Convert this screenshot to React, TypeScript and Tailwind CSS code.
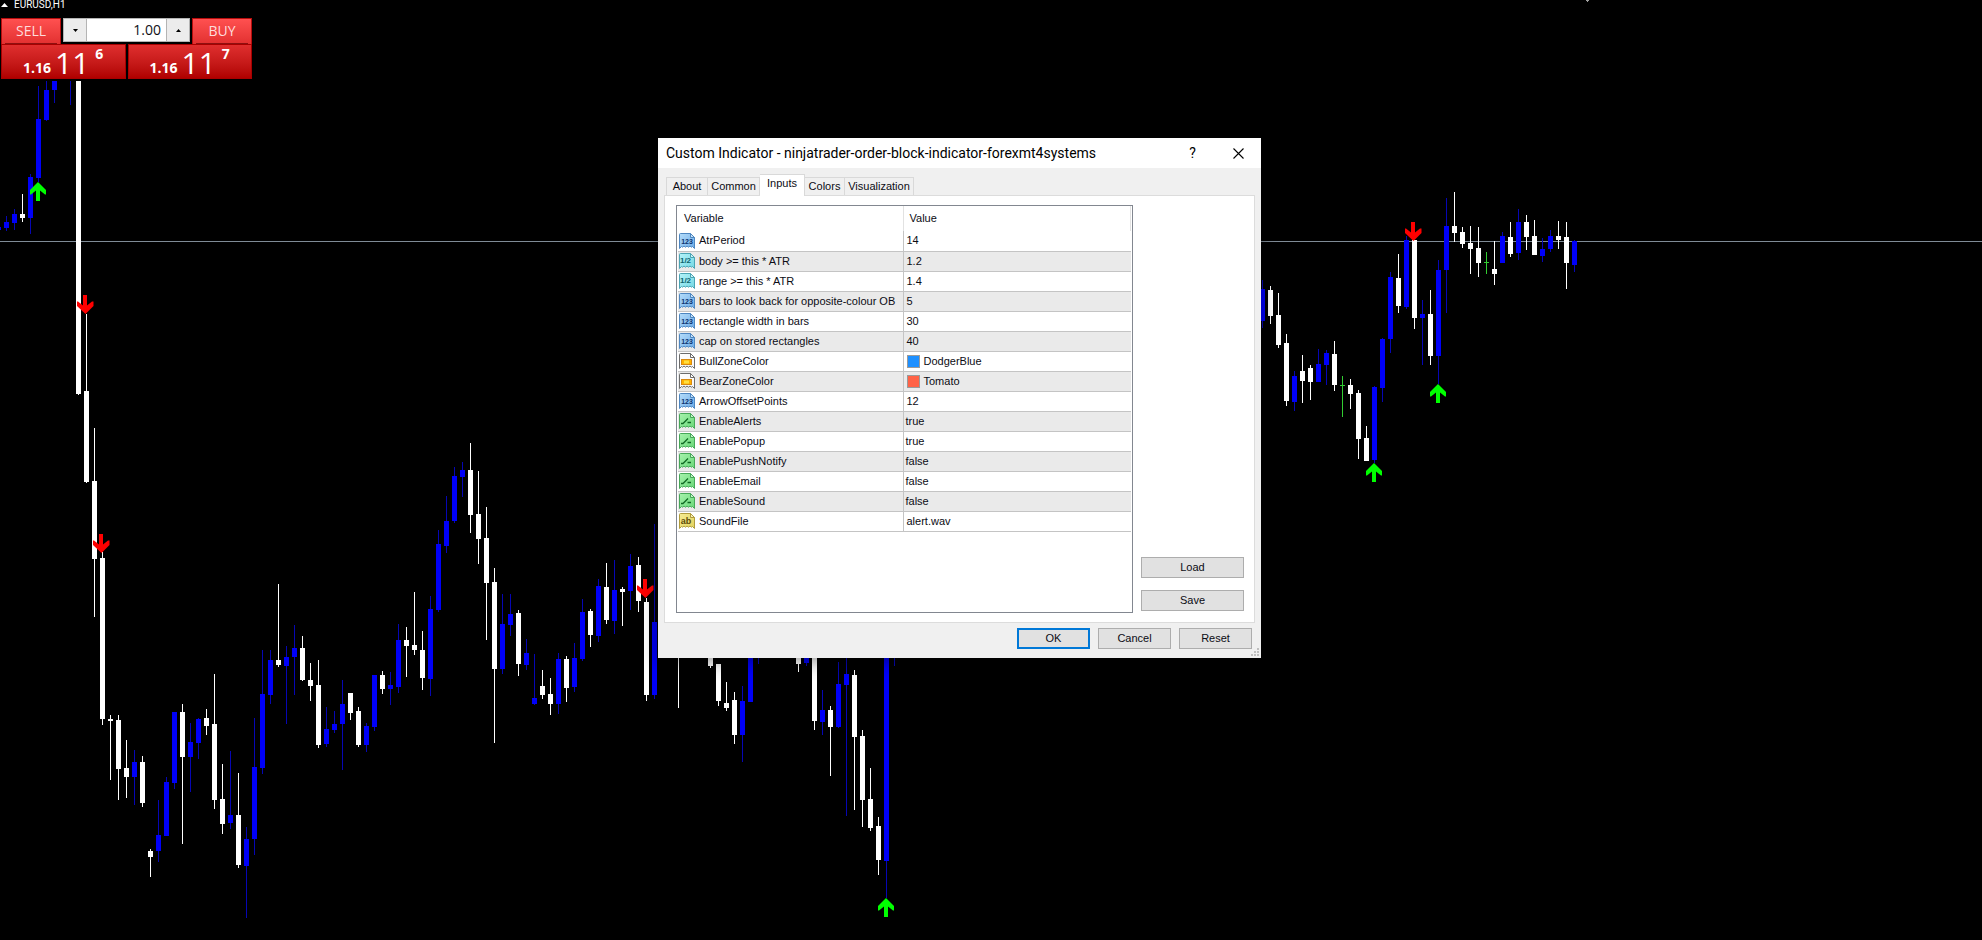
import { useState } from 'react';

type Tone = 'b' | 'w' | 'g';
type Candle = [x: number, high: number, top: number, bottom: number, low: number, tone: Tone];

const candles: Candle[] = [
  [-2, 227, 227, 230, 230, 'b'], [6, 216, 222, 228, 231, 'b'], [14, 209, 214, 223, 230, 'b'],
  [22, 194, 214, 218, 222, 'w'], [30, 174, 177, 218, 234, 'b'], [38, 86, 119, 178, 182, 'b'],
  [46, 81, 90, 120, 121, 'b'], [54, 81, 81, 90, 103, 'b'], [70, 81, 81, 81, 105, 'b'],
  [78, 81, 81, 394, 395, 'w'], [86, 314, 391, 482, 483, 'w'], [94, 428, 481, 559, 617, 'w'],
  [102, 552, 558, 719, 725, 'w'], [110, 715, 719, 721, 780, 'w'], [118, 715, 720, 769, 800, 'w'],
  [126, 740, 768, 777, 798, 'w'], [134, 750, 762, 777, 805, 'b'], [142, 756, 762, 803, 807, 'w'],
  [150, 849, 851, 857, 877, 'w'], [158, 800, 835, 851, 862, 'b'], [166, 777, 782, 836, 836, 'b'],
  [174, 712, 712, 783, 789, 'b'], [182, 704, 712, 757, 844, 'w'], [190, 723, 742, 757, 792, 'b'],
  [198, 718, 719, 743, 759, 'b'], [206, 709, 718, 726, 735, 'w'], [214, 674, 724, 800, 809, 'w'],
  [222, 764, 799, 824, 834, 'w'], [230, 751, 815, 823, 829, 'b'], [238, 773, 815, 865, 868, 'w'],
  [246, 827, 839, 866, 918, 'b'], [254, 718, 767, 839, 855, 'b'], [262, 650, 694, 768, 774, 'b'],
  [270, 650, 660, 695, 704, 'b'], [278, 584, 660, 665, 667, 'w'], [286, 646, 657, 666, 724, 'b'],
  [294, 625, 648, 657, 695, 'b'], [302, 636, 648, 680, 681, 'w'], [310, 663, 680, 686, 701, 'w'],
  [318, 660, 685, 745, 748, 'w'], [326, 707, 729, 744, 747, 'b'], [334, 711, 724, 730, 733, 'b'],
  [342, 680, 704, 724, 770, 'b'], [350, 693, 693, 713, 720, 'w'], [358, 707, 711, 745, 747, 'w'],
  [366, 723, 726, 745, 752, 'b'], [374, 675, 675, 727, 731, 'b'], [382, 671, 675, 689, 694, 'w'],
  [390, 672, 685, 689, 705, 'b'], [398, 624, 640, 687, 693, 'b'], [406, 627, 640, 646, 677, 'w'],
  [414, 592, 645, 650, 655, 'w'], [422, 631, 650, 678, 690, 'w'], [430, 596, 609, 679, 696, 'b'],
  [438, 530, 544, 610, 612, 'b'], [446, 496, 521, 546, 553, 'b'], [454, 467, 476, 521, 523, 'b'],
  [462, 462, 470, 477, 497, 'b'], [470, 443, 470, 515, 533, 'w'], [478, 471, 514, 539, 564, 'w'],
  [486, 507, 538, 583, 640, 'w'], [494, 568, 582, 669, 743, 'w'], [502, 594, 624, 669, 674, 'b'],
  [510, 594, 614, 625, 636, 'b'], [518, 610, 613, 664, 676, 'w'], [526, 639, 653, 665, 670, 'b'],
  [534, 654, 698, 704, 705, 'b'], [542, 670, 686, 695, 699, 'w'], [550, 678, 694, 704, 715, 'w'],
  [558, 653, 659, 704, 714, 'b'], [566, 656, 659, 688, 702, 'w'], [574, 643, 658, 687, 692, 'b'],
  [582, 599, 612, 659, 661, 'b'], [590, 609, 611, 635, 647, 'w'], [598, 579, 586, 636, 642, 'b'],
  [606, 563, 587, 620, 624, 'w'], [614, 560, 590, 621, 634, 'b'], [622, 587, 589, 592, 626, 'w'],
  [630, 554, 566, 591, 610, 'b'], [638, 557, 565, 601, 612, 'w'], [646, 598, 602, 695, 701, 'w'],
  [654, 524, 622, 695, 699, 'b'], [678, 600, 610, 640, 708, 'w'], [710, 600, 620, 666, 668, 'w'],
  [718, 664, 664, 701, 706, 'w'], [726, 682, 703, 708, 711, 'w'], [734, 692, 700, 735, 744, 'w'],
  [742, 686, 701, 735, 762, 'b'], [750, 620, 630, 702, 702, 'b'], [758, 620, 630, 650, 664, 'b'],
  [798, 620, 630, 664, 672, 'w'], [806, 620, 640, 663, 666, 'b'], [814, 620, 630, 721, 730, 'w'],
  [822, 690, 710, 722, 735, 'b'], [830, 706, 710, 727, 776, 'w'], [838, 662, 684, 727, 728, 'b'],
  [846, 640, 674, 685, 816, 'b'], [854, 670, 675, 737, 810, 'w'], [862, 730, 736, 800, 827, 'w'],
  [870, 768, 799, 828, 831, 'w'], [878, 817, 826, 860, 875, 'w'], [886, 500, 520, 861, 898, 'b'],
  [894, 500, 520, 640, 666, 'b'], [1262, 280, 289, 321, 328, 'b'], [1270, 286, 290, 316, 324, 'w'],
  [1278, 293, 315, 345, 348, 'w'], [1286, 334, 343, 401, 406, 'w'], [1294, 371, 376, 402, 411, 'b'],
  [1302, 355, 371, 381, 403, 'w'], [1310, 365, 368, 382, 400, 'w'], [1318, 349, 364, 382, 382, 'b'],
  [1326, 350, 353, 365, 385, 'b'], [1334, 341, 354, 385, 391, 'w'], [1342, 376, 385, 386, 417, 'g'],
  [1350, 379, 385, 394, 409, 'w'], [1358, 390, 393, 439, 459, 'w'], [1366, 426, 438, 461, 461, 'w'],
  [1374, 386, 387, 460, 463, 'b'], [1382, 338, 339, 388, 402, 'b'], [1390, 272, 277, 339, 353, 'b'],
  [1398, 254, 278, 306, 313, 'w'], [1406, 236, 240, 307, 309, 'b'], [1414, 240, 240, 318, 329, 'w'],
  [1422, 300, 314, 318, 365, 'b'], [1430, 290, 314, 356, 365, 'w'], [1438, 260, 270, 356, 384, 'b'],
  [1446, 198, 226, 270, 313, 'b'], [1454, 192, 226, 233, 242, 'w'], [1462, 227, 232, 244, 248, 'w'],
  [1470, 226, 243, 249, 274, 'w'], [1478, 227, 248, 263, 277, 'w'], [1486, 252, 262, 263, 274, 'g'],
  [1494, 241, 269, 274, 285, 'w'], [1502, 232, 236, 263, 263, 'b'], [1510, 222, 237, 254, 257, 'w'],
  [1518, 209, 222, 253, 260, 'b'], [1526, 215, 222, 237, 250, 'w'], [1534, 220, 236, 255, 255, 'w'],
  [1542, 238, 249, 256, 262, 'b'], [1550, 230, 236, 249, 252, 'b'], [1558, 221, 236, 240, 249, 'w'],
  [1566, 222, 237, 263, 289, 'w'], [1574, 240, 241, 265, 272, 'b'],
];

const bodyFill: Record<Tone, string> = { b: '#0000f8', w: '#ffffff', g: '#32cd32' };
const wickFill: Record<Tone, string> = { b: '#0606b4', w: '#ffffff', g: '#32cd32' };

const signals: { x: number; y: number; up: boolean }[] = [
  { x: 30, y: 182, up: true },
  { x: 77, y: 295, up: false },
  { x: 93, y: 534, up: false },
  { x: 637, y: 579, up: false },
  { x: 878, y: 898, up: true },
  { x: 1366, y: 463, up: true },
  { x: 1405, y: 222, up: false },
  { x: 1430, y: 384, up: true },
];

function Chart() {
  return (
    <svg className="absolute inset-0 h-full w-full" shapeRendering="crispEdges" role="img" aria-label="EURUSD H1 price chart">
      <rect x="0" y="241" width="100%" height="1" fill="#7f8b96" />
      {candles.map(([x, high, top, bottom, low, tone]) => (
        <g key={x}>
          <rect x={x} y={high} width="1" height={low - high} fill={wickFill[tone]} />
          <rect x={x - 2} y={top} width="5" height={bottom - top} fill={bodyFill[tone]} />
        </g>
      ))}
      {signals.map(({ x, y, up }) => (
        <path
          key={`${x}-${y}`}
          shapeRendering="auto"
          transform={`translate(${x} ${y})`}
          fill={up ? '#00ff00' : '#ff0000'}
          d={
            up
              ? 'M8 0 L16 8 V12.5 H15 L10 8.5 V19 H6 V8.5 L1 12.5 H0 V8 Z'
              : 'M6 0 H10 V10.5 L15 6.5 H16.5 V11 L8.5 19 L0 11 V6.5 H1 L6 10.5 Z'
          }
        />
      ))}
      <path d="M1586 0 h3 v1 h-1 v1 h-1 v-1 h-1 z" fill="#a0a0a0" />
    </svg>
  );
}

function Quote({ side, last }: { side: string; last: string }) {
  return (
    <button
      type="button"
      aria-label={`${side} at 1.1611${last}`}
      className="flex h-[35px] flex-1 gap-1 border border-[#a80000] bg-linear-to-b from-[#e02e2e] to-[#b00000] pl-[21px] font-bold text-white"
    >
      <span className="pt-[13px] text-sm">1.16</span>
      <span className="text-3xl leading-[36px] font-normal">11</span>
      <span className="pl-0.5 text-sm leading-[18px]">{last}</span>
    </button>
  );
}

function TradePanel() {
  const [lots, setLots] = useState(1);
  const side =
    'flex h-[26px] w-[60px] flex-col border border-b-0 border-[#b80d0d] bg-linear-to-b from-[#ff5050] to-[#e23030] px-[3px] text-sm text-[#ffdcdc]';
  const spin = 'flex w-6 shrink-0 items-center justify-center border border-[#b4b4b4] bg-[#ececec]';
  return (
    <section
      aria-label="One click trading"
      className="absolute top-0 left-0 w-[253px] font-['Open_Sans','Noto_Sans',sans-serif]"
    >
      <h1 className="flex h-[18px] items-start gap-1.5 pl-px font-['Roboto',sans-serif] text-[10px] leading-[10px] text-white">
        <svg className="mt-[3px]" width="7" height="4" aria-hidden="true">
          <path d="M3.5 0 L7 4 H0 Z" fill="#fff" />
        </svg>
        EURUSD,H1
      </h1>
      <div className="flex items-start justify-between px-px">
        <button type="button" className={side}>
          <span className="flex-1 border-b border-[#8e1010] leading-[24px]">SELL</span>
        </button>
        <div className="flex h-6 w-[127px] bg-white">
          <button type="button" aria-label="Decrease volume" className={spin} onClick={() => setLots(Math.max(0, lots - 1))}>
            <svg width="5" height="3" aria-hidden="true"><path d="M0 0 H5 L2.5 3 Z" fill="#000" /></svg>
          </button>
          <input
            aria-label="Volume"
            className="w-full min-w-0 border-y border-[#b4b4b4] bg-white px-[5px] text-right text-sm text-[#101018] outline-none"
            value={lots.toFixed(2)}
            onChange={(e) => setLots(Number(e.target.value) || 0)}
          />
          <button type="button" aria-label="Increase volume" className={spin} onClick={() => setLots(lots + 1)}>
            <svg width="5" height="3" aria-hidden="true"><path d="M0 3 H5 L2.5 0 Z" fill="#000" /></svg>
          </button>
        </div>
        <button type="button" className={side}>
          <span className="flex-1 border-b border-[#8e1010] leading-[24px]">BUY</span>
        </button>
      </div>
      <div className="flex gap-0.5 px-px">
        <Quote side="Sell" last="6" />
        <Quote side="Buy" last="7" />
      </div>
    </section>
  );
}

type Kind = 'int' | 'real' | 'color' | 'bool' | 'text';

const palette: Record<Kind, { from: string; to: string; edge: string; ink: string }> = {
  int: { from: '#b4dcfa', to: '#6cabe6', edge: '#4d86c0', ink: '#0b3470' },
  real: { from: '#b4f2f8', to: '#74d8e4', edge: '#4aa4b4', ink: '#0e6470' },
  color: { from: '#ffffff', to: '#f4f4f4', edge: '#6c6c6c', ink: '#e09010' },
  bool: { from: '#a6f2ac', to: '#68d878', edge: '#46a858', ink: '#106a24' },
  text: { from: '#f6ec94', to: '#e2d25c', edge: '#b09c3c', ink: '#5c4c08' },
};

function KindIcon({ kind }: { kind: Kind }) {
  const c = palette[kind];
  const id = `fill-${kind}`;
  return (
    <svg width="16" height="16" viewBox="0 0 16 16" aria-hidden="true" className="shrink-0">
      <defs>
        <linearGradient id={id} x1="0" y1="0" x2="1" y2="1">
          <stop offset="0" stopColor={c.from} />
          <stop offset="1" stopColor={c.to} />
        </linearGradient>
      </defs>
      <path
        d="M0.5 1.5 Q0.5 0.5 1.5 0.5 H11.5 L15.5 4.5 V15.5 L13.5 13.5 L12.5 14.2 L11 13 L9.5 14.2 L8 13 L6.5 14.2 L5 13 L3.5 14.2 L2.5 13.5 L0.5 15.5 Z"
        fill={`url(#${id})`}
        stroke={c.edge}
      />
      <path d="M11.5 0.5 V4.5 H15.5 Z" fill="#ffffff" fillOpacity="0.5" stroke={c.edge} />
      {kind === 'int' && (
        <text x="8" y="11" textAnchor="middle" fontSize="7" fontWeight="700" fontFamily="Liberation Sans, sans-serif" fill={c.ink}>
          123
        </text>
      )}
      {kind === 'real' && (
        <text x="6.5" y="10" textAnchor="middle" fontSize="8" fontWeight="700" fontFamily="Liberation Sans, sans-serif" fill={c.ink}>
          1/2
        </text>
      )}
      {kind === 'text' && (
        <text x="7" y="11" textAnchor="middle" fontSize="9" fontWeight="700" fontFamily="Liberation Sans, sans-serif" fill={c.ink}>
          ab
        </text>
      )}
      {kind === 'bool' && (
        <path d="M2 10.5 H4 L9 5.5 M8.5 9.5 H12" fill="none" stroke={c.ink} strokeWidth="1.3" />
      )}
      {kind === 'color' && (
        <>
          <rect x="2.5" y="6.5" width="10" height="5" fill="#ffb000" stroke="#d88a10" />
          <rect x="5" y="7.5" width="5" height="3" fill="#ffe040" />
        </>
      )}
    </svg>
  );
}

const rows: { kind: Kind; name: string; value: string; swatch?: string }[] = [
  { kind: 'int', name: 'AtrPeriod', value: '14' },
  { kind: 'real', name: 'body >= this * ATR', value: '1.2' },
  { kind: 'real', name: 'range >= this * ATR', value: '1.4' },
  { kind: 'int', name: 'bars to look back for opposite-colour OB', value: '5' },
  { kind: 'int', name: 'rectangle width in bars', value: '30' },
  { kind: 'int', name: 'cap on stored rectangles', value: '40' },
  { kind: 'color', name: 'BullZoneColor', value: 'DodgerBlue', swatch: 'bg-[#1e90ff]' },
  { kind: 'color', name: 'BearZoneColor', value: 'Tomato', swatch: 'bg-[#ff6347]' },
  { kind: 'int', name: 'ArrowOffsetPoints', value: '12' },
  { kind: 'bool', name: 'EnableAlerts', value: 'true' },
  { kind: 'bool', name: 'EnablePopup', value: 'true' },
  { kind: 'bool', name: 'EnablePushNotify', value: 'false' },
  { kind: 'bool', name: 'EnableEmail', value: 'false' },
  { kind: 'bool', name: 'EnableSound', value: 'false' },
  { kind: 'text', name: 'SoundFile', value: 'alert.wav' },
];

function InputsTable() {
  return (
    <div className="h-[408px] w-[457px] border border-[#828790] bg-white px-px">
      <table className="w-full table-fixed border-collapse text-left">
        <colgroup>
          <col className="w-[225px]" />
          <col />
        </colgroup>
        <thead>
          <tr className="h-[25px]">
            <th className="border-r border-[#e2e2e2] p-0 pl-1.5 font-normal">Variable</th>
            <th className="border-r border-[#e2e2e2] p-0 pl-1.5 font-normal">Value</th>
          </tr>
        </thead>
        <tbody>
          {rows.map((r) => (
            <tr key={r.name} className="h-5 border-b border-[#c4c4c4] even:bg-[#eaeaea]">
              <td className="border-r border-[#c4c4c4] p-0 pl-px">
                <span className="flex items-center gap-1 whitespace-nowrap">
                  <KindIcon kind={r.kind} />
                  {r.name}
                </span>
              </td>
              <td className={r.kind === 'bool' ? 'p-0 pl-0.5' : 'p-0 pl-[3px]'}>
                <span className="flex items-center gap-1">
                  {r.swatch && <span className={`h-[13px] w-[13px] border border-[#9a9a9a] ${r.swatch}`} />}
                  {r.value}
                </span>
              </td>
            </tr>
          ))}
        </tbody>
      </table>
    </div>
  );
}

const tabs: { label: string; size: string }[] = [
  { label: 'About', size: 'w-[42px]' },
  { label: 'Common', size: 'w-[52px]' },
  { label: 'Inputs', size: 'w-[45px]' },
  { label: 'Colors', size: 'w-10' },
  { label: 'Visualization', size: 'w-[69px]' },
];

function Dialog() {
  const [active, setActive] = useState('Inputs');
  const plain = 'h-[21px] border border-[#adadad] bg-[#e1e1e1]';
  return (
    <div
      role="dialog"
      aria-labelledby="dialog-title"
      className="absolute top-[138px] left-[658px] flex w-[603px] flex-col bg-[#f0f0f0] font-['Liberation_Sans',Arial,sans-serif] text-[11px] leading-[13px] text-[#0c0c14] shadow-[0_4px_16px_rgba(0,0,0,0.4)]"
    >
      <header className="flex h-[30px] items-center bg-white pl-2 font-['Roboto',sans-serif] text-black">
        <h2 id="dialog-title" className="flex-1 text-sm">
          Custom Indicator - ninjatrader-order-block-indicator-forexmt4systems
        </h2>
        <button type="button" aria-label="Help" className="h-full w-[45px] text-sm">
          ?
        </button>
        <button type="button" aria-label="Close" className="flex h-full w-[46px] items-center justify-center">
          <svg width="11" height="11" viewBox="0 0 11 11" aria-hidden="true">
            <path d="M0.5 0.5 L10.5 10.5 M10.5 0.5 L0.5 10.5" stroke="#000" strokeWidth="1.1" />
          </svg>
        </button>
      </header>
      <div role="tablist" className="flex items-end px-2 pt-1.5">
        {tabs.map((t) => (
          <button
            key={t.label}
            type="button"
            role="tab"
            aria-selected={active === t.label}
            onClick={() => setActive(t.label)}
            className={`${t.size} shrink-0 border-t border-r border-[#d9d9d9] first:border-l ${
              active === t.label ? 'z-10 -mb-px h-[22px] bg-white pb-1' : 'h-[18px]'
            }`}
          >
            {t.label}
          </button>
        ))}
      </div>
      <div role="tabpanel" className="mx-1.5 flex h-[428px] justify-between border border-[#dcdcdc] bg-white py-[9px] pr-2.5 pl-[11px]">
        <InputsTable />
        <div className="flex w-[103px] flex-col justify-end gap-3 pb-0.5">
          <button type="button" className={plain}>Load</button>
          <button type="button" className={plain}>Save</button>
        </div>
      </div>
      <footer className="flex h-[35px] items-start justify-end gap-2 pt-[5px] pr-[9px]">
        <button type="button" className="h-[21px] w-[73px] border-2 border-[#0078d7] bg-[#e1e1e1]">OK</button>
        <button type="button" className={`w-[73px] ${plain}`}>Cancel</button>
        <button type="button" className={`w-[73px] ${plain}`}>Reset</button>
      </footer>
      <svg className="absolute right-0.5 bottom-0.5" width="8" height="8" shapeRendering="crispEdges" aria-hidden="true">
        <path d="M6 0h2v2h-2z M3 3h2v2h-2z M6 3h2v2h-2z M0 6h2v2h-2z M3 6h2v2h-2z M6 6h2v2h-2z" fill="#bfbfbf" />
      </svg>
    </div>
  );
}

export default function App() {
  return (
    <main className="relative min-h-screen overflow-hidden bg-black">
      <Chart />
      <TradePanel />
      <Dialog />
    </main>
  );
}
